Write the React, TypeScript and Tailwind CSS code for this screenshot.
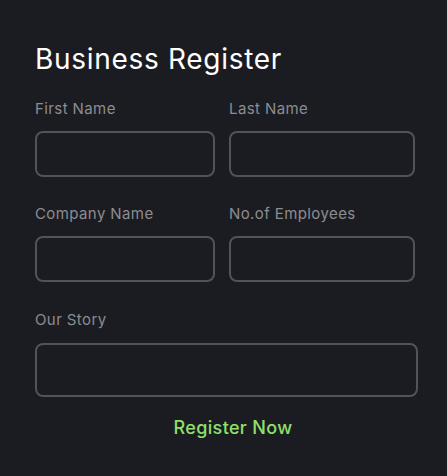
export default function App() {
  const label = "block text-[15px] leading-[20px] tracking-[0.4px] text-[#8c8c91]";
  const field =
    "block w-full h-[46px] rounded-[8px] border-2 border-[#525358] bg-transparent px-3 text-white outline-none";

  return (
    <div className="min-h-screen w-full bg-[#1b1c21] font-['Inter',sans-serif]">
      <form className="pl-[35px] pt-[41px]" onSubmit={(e) => e.preventDefault()}>
        <h1 className="text-[28px] leading-[36px] tracking-[0.7px] font-normal text-white">Business Register</h1>

        {/* name row */}
        <div className="mt-[22px] grid grid-cols-[180px_186px] gap-x-[14px]">
          <div>
            <label className={label}>First Name</label>
            <input className={`${field} mt-[12px]`} />
          </div>
          <div>
            <label className={label}>Last Name</label>
            <input className={`${field} mt-[12px]`} />
          </div>
        </div>

        {/* company row */}
        <div className="mt-[27px] grid grid-cols-[180px_186px] gap-x-[14px]">
          <div>
            <label className={label}>Company Name</label>
            <input className={`${field} mt-[12px]`} />
          </div>
          <div>
            <label className={label}>No.of Employees</label>
            <input className={`${field} mt-[12px]`} />
          </div>
        </div>

        <div className="mt-[28px] w-[383px]">
          <label className={label}>Our Story</label>
          <textarea className="mt-[13px] block w-full h-[54px] resize-none rounded-[8px] border-2 border-[#525358] bg-transparent px-3 text-white outline-none" />
        </div>

        <div className="mt-[19px] flex w-[396px] justify-center">
          <button type="submit" className="text-[18px] leading-[24px] tracking-[0.35px] font-medium text-[#8fe06a]">
            Register Now
          </button>
        </div>
      </form>
    </div>
  );
}
